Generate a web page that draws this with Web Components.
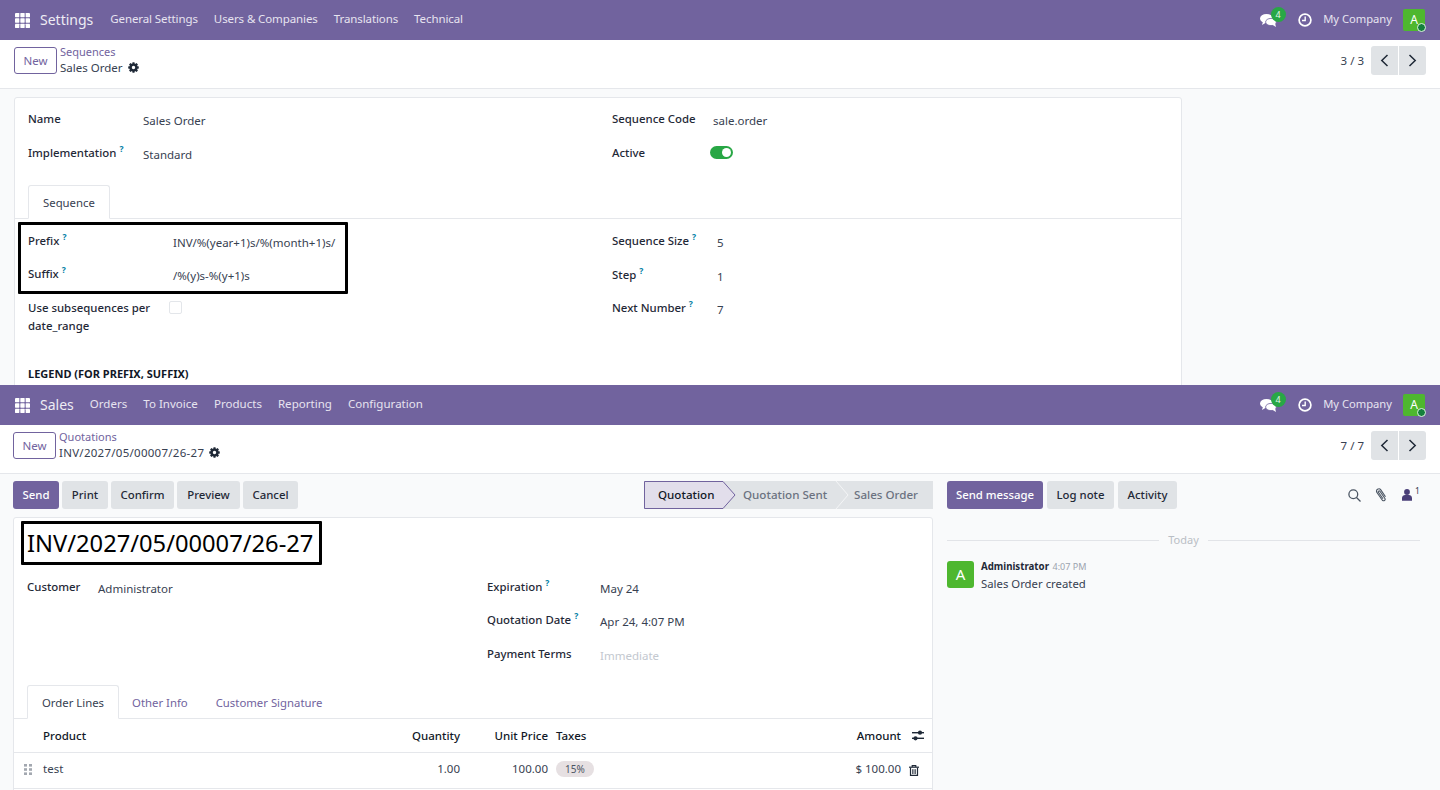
<!DOCTYPE html>
<html>
<head>
<meta charset="utf-8">
<title>Sequence and quotation</title>
<style>
  html, body { margin: 0; padding: 0; height: 790px; overflow: hidden; }
  body { font: 11.5px/18px "Noto Sans", "Open Sans", sans-serif; color: #374151; background: #f9fafb; }
</style>
</head>
<body>

<o-screen style="height:385px">
  <o-navbar app="Settings">
    <o-menu-item>General Settings</o-menu-item>
    <o-menu-item>Users &amp; Companies</o-menu-item>
    <o-menu-item>Translations</o-menu-item>
    <o-menu-item>Technical</o-menu-item>
  </o-navbar>
  <o-control-panel parent="Sequences" title="Sales Order" pager="3 / 3" style="--left:14px"></o-control-panel>
  <o-sheet style="margin:8px 0 0 14px;width:1168px">
    <o-columns style="--right:597px">
      <div slot="left" style="padding:6px 0 0 13px">
        <o-field label="Name" style="--lw:115px;--h:33.5px">Sales Order</o-field>
        <o-field label="Implementation" help style="--lw:115px;--h:33.5px">Standard</o-field>
      </div>
      <div slot="right" style="padding-top:6px">
        <o-field label="Sequence Code" style="--lw:101px;--h:33.5px">sale.order</o-field>
        <o-field label="Active" style="--lw:98px;--h:33.5px"><o-toggle></o-toggle></o-field>
      </div>
    </o-columns>
    <o-tabs style="margin-top:14px">
      <o-tab active>Sequence</o-tab>
    </o-tabs>
    <o-columns style="--right:597px">
      <div slot="left" style="padding-left:13px">
        <o-callout style="margin:3px 0 0 -10px;width:330px;padding:1px 0 0 7px;height:72px">
          <o-field label="Prefix" help style="--lw:145px">INV/%(year+1)s/%(month+1)s/</o-field>
          <o-field label="Suffix" help style="--lw:145px">/%(y)s-%(y+1)s</o-field>
        </o-callout>
        <o-field label="Use subsequences per date_range" style="--lw:145px;--h:38px;margin-top:-1px;--lwrap:132px"><o-checkbox></o-checkbox></o-field>
        <o-legend style="margin-top:34px">LEGEND (FOR PREFIX, SUFFIX)</o-legend>
      </div>
      <div slot="right" style="padding-top:7px">
        <o-field label="Sequence Size" help style="--lw:105px;--h:33.5px">5</o-field>
        <o-field label="Step" help style="--lw:105px;--h:33.5px">1</o-field>
        <o-field label="Next Number" help style="--lw:105px;--h:33.5px">7</o-field>
      </div>
    </o-columns>
  </o-sheet>
</o-screen>

<o-screen style="height:405px">
  <o-navbar app="Sales" style="--app-gap:16px;--menu-ls:.03px">
    <o-menu-item>Orders</o-menu-item>
    <o-menu-item>To Invoice</o-menu-item>
    <o-menu-item>Products</o-menu-item>
    <o-menu-item>Reporting</o-menu-item>
    <o-menu-item>Configuration</o-menu-item>
  </o-navbar>
  <o-control-panel parent="Quotations" title="INV/2027/05/00007/26-27" pager="7 / 7" style="--left:13px;--title-ls:.27px"></o-control-panel>
  <o-split>
    <div slot="form">
      <o-toolbar>
        <o-button kind="primary" style="width:46px">Send</o-button>
        <o-button style="width:46px">Print</o-button>
        <o-button style="width:63px">Confirm</o-button>
        <o-button style="width:63px">Preview</o-button>
        <o-button style="width:55px">Cancel</o-button>
        <o-statusbar></o-statusbar>
      </o-toolbar>
      <o-sheet style="margin-top:8px">
        <o-callout style="margin:3px 0 0 7px;width:301px;height:44px;padding:0 0 0 3px;align-items:center;display:flex">
          <o-title>INV/2027/05/00007/26-27</o-title>
        </o-callout>
        <o-columns style="--right:473px;margin-top:6.5px">
          <div slot="left" style="padding-left:13px">
            <o-field label="Customer" style="--lw:71px">Administrator</o-field>
          </div>
          <div slot="right">
            <o-field label="Expiration" help style="--lw:113px;--h:33.5px">May 24</o-field>
            <o-field label="Quotation Date" help style="--lw:113px;--h:33.5px">Apr 24, 4:07 PM</o-field>
            <o-field label="Payment Terms" style="--lw:113px;--h:33.5px"><span style="color:#c3c8cf">Immediate</span></o-field>
          </div>
        </o-columns>
        <o-tabs style="margin-top:12.5px">
          <o-tab active>Order Lines</o-tab>
          <o-tab>Other Info</o-tab>
          <o-tab>Customer Signature</o-tab>
        </o-tabs>
        <o-order-lines></o-order-lines>
      </o-sheet>
    </div>
    <o-chatter slot="chatter"></o-chatter>
  </o-split>
</o-screen>

<script>
const gearIcon = `<svg width="11" height="11" viewBox="0 0 24 24"><circle cx="12" cy="12" r="6.2" fill="none" stroke="#1f2937" stroke-width="5"/><g fill="#1f2937"><rect x="9.5" y="0.5" width="5" height="5" rx="1"/><rect x="9.5" y="18.5" width="5" height="5" rx="1"/><rect x="0.5" y="9.5" width="5" height="5" rx="1"/><rect x="18.5" y="9.5" width="5" height="5" rx="1"/><rect x="9.5" y="0.5" width="5" height="5" rx="1" transform="rotate(45 12 12)"/><rect x="9.5" y="18.5" width="5" height="5" rx="1" transform="rotate(45 12 12)"/><rect x="0.5" y="9.5" width="5" height="5" rx="1" transform="rotate(45 12 12)"/><rect x="18.5" y="9.5" width="5" height="5" rx="1" transform="rotate(45 12 12)"/></g></svg>`;

// Base class, every element just hands over its html
class ShadowBase extends HTMLElement {
  connectedCallback() {
    if (this.shadowRoot) return;
    const shadow = this.attachShadow({ mode: 'open' });
    const template = document.createElement('template');
    template.innerHTML = this.render();
    shadow.appendChild(template.content.cloneNode(true));
  }
}

class OScreen extends ShadowBase {
  render() {
    return `<style>:host { display: flex; flex-direction: column; overflow: hidden; }</style><slot></slot>`;
  }
}

class OMenuItem extends ShadowBase {
  render() {
    return `<style>:host { display: block; color: #e7e4f0; font-size: 11.5px; letter-spacing: var(--menu-ls, -.1px); margin-top: -2px; }</style><slot></slot>`;
  }
}

class ONavbar extends ShadowBase {
  render() {
    const cells = [0, 1, 2].map(y => [0, 1, 2].map(x =>
      `<rect x="${x * 5.4}" y="${y * 5.4}" width="4.4" height="4.4" rx=".5"/>`).join('')).join('');
    return `
    <style>
      :host { display: flex; align-items: center; flex: none; height: 40px; background: #71639e; color: #f1eff6; padding: 0 15px; box-sizing: border-box; }
      .grid { margin-right: 10px; display: block; }
      .app { font-size: 14px; margin-right: var(--app-gap, 17px); color: #eeecf4; }
      .menu { display: flex; gap: 16px; flex: 1; }
      .right { display: flex; align-items: center; }
      .chat { position: relative; width: 18px; height: 16px; margin-right: 20px; margin-top: 1px; }
      .badge { position: absolute; left: 10.5px; top: -6px; width: 15px; height: 15px; border-radius: 50%; background: #28a745; color: #e6f5e9; font-size: 9px; line-height: 15px; text-align: center; }
      .company { font-size: 11.2px; color: #e7e4f0; margin: -2px 11px 0 11px; }
      .avatar { position: relative; width: 22px; height: 22px; background: #4eb72f; border-radius: 2px; color: #fff; font-size: 12px; line-height: 22px; text-align: center; }
      .dot { position: absolute; right: -1px; bottom: -1px; width: 7px; height: 7px; border-radius: 50%; background: #14803c; border: 1px solid #dff3e2; }
    </style>
    <svg class="grid" width="15" height="15" viewBox="0 0 15.2 15.2" fill="#fff">${cells}</svg>
    <span class="app">${this.getAttribute('app')}</span>
    <div class="menu"><slot></slot></div>
    <div class="right">
      <div class="chat">
        <svg width="17" height="15" viewBox="0 0 17 15" fill="#fff" style="display:block"><ellipse cx="6.5" cy="5.5" rx="6.5" ry="4.6"/><path d="M3 8.5 L2 12 L7 9z"/><ellipse cx="11" cy="9" rx="5.4" ry="3.6" stroke="#71639e" stroke-width=".8"/><path d="M12 11.5 L16 14 L15 10z"/></svg>
        <span class="badge">4</span>
      </div>
      <svg width="14" height="14" viewBox="0 0 14 14" fill="none" stroke="#fff" stroke-width="1.7"><circle cx="7" cy="7" r="5.9"/><path d="M7.2 3.6V7.5H4" stroke-width="1.4"/></svg>
      <span class="company">My Company</span>
      <div class="avatar">A<span class="dot"></span></div>
    </div>`;
  }
}

class OControlPanel extends ShadowBase {
  render() {
    return `
    <style>
      :host { display: flex; align-items: center; flex: none; height: 49px; background: #fff; border-bottom: 1px solid #e5e7eb; padding: 0 14px 7px var(--left); box-sizing: border-box; }
      .new { width: 43px; height: 27px; box-sizing: border-box; border: 1px solid #71639e; border-radius: 3px; color: #71639e; text-align: center; line-height: 25px; font-size: 11.5px; margin-right: 3px; }
      .crumbs { flex: 1; line-height: 16px; font-size: 11.5px; margin-top: -2px; }
      .parent { color: #71639e; font-size: 11px; }
      .title { display: flex; align-items: center; gap: 5px; color: #374151; letter-spacing: var(--title-ls, 0); }
      .pager { display: flex; align-items: center; gap: 7px; font-size: 11.5px; }
      .nav { display: flex; gap: 1px; }
      .nav div { width: 27px; height: 29px; background: #e0e3e6; display: flex; align-items: center; justify-content: center; }
      .nav div:first-child { border-radius: 3px 0 0 3px; }
      .nav div:last-child { border-radius: 0 3px 3px 0; }
    </style>
    <div class="new">New</div>
    <div class="crumbs">
      <div class="parent">${this.getAttribute('parent')}</div>
      <div class="title"><span>${this.getAttribute('title')}</span>${gearIcon}</div>
    </div>
    <div class="pager">
      <span>${this.getAttribute('pager')}</span>
      <div class="nav">
        <div><svg width="9" height="13" viewBox="0 0 9 13" fill="none" stroke="#1f2937" stroke-width="1.5"><path d="M7.5 1 L1.8 6.5 L7.5 12"/></svg></div>
        <div><svg width="9" height="13" viewBox="0 0 9 13" fill="none" stroke="#1f2937" stroke-width="1.5"><path d="M1.5 1 L7.2 6.5 L1.5 12"/></svg></div>
      </div>
    </div>`;
  }
}

class OSheet extends ShadowBase {
  render() {
    return `<style>:host { display: block; background: #fff; border: 1px solid #e5e7eb; border-radius: 3px 3px 0 0; box-sizing: border-box; min-height: 400px; }</style><slot></slot>`;
  }
}

class OColumns extends ShadowBase {
  render() {
    return `
    <style>
      :host { display: grid; grid-template-columns: var(--right) 1fr; }
    </style>
    <slot name="left"></slot><slot name="right"></slot>`;
  }
}

class OField extends ShadowBase {
  render() {
    const help = this.hasAttribute('help') ? '<sup>?</sup>' : '';
    return `
    <style>
      :host { display: grid; grid-template-columns: var(--lw) 1fr; height: var(--h, 33px); }
      .label { font-weight: 500; color: #1f2937; padding-top: 6px; font-size: 11.4px; max-width: var(--lwrap, none); }
      .value { padding-top: 8px; font-size: 11.5px; color: #374151; }
      sup { color: #0180a5; font-size: 8.5px; font-weight: 700; line-height: 0; margin-left: 3px; vertical-align: 5px; }
    </style>
    <div class="label">${this.getAttribute('label')}${help}</div>
    <div class="value"><slot></slot></div>`;
  }
}

class OToggle extends ShadowBase {
  render() {
    return `
    <style>
      :host { display: block; width: 23px; height: 13px; border-radius: 7px; background: #28a745; position: relative; }
      i { position: absolute; right: 2px; top: 2px; width: 9px; height: 9px; border-radius: 50%; background: #fff; }
    </style><i></i>`;
  }
}

class OCheckbox extends ShadowBase {
  render() {
    return `<style>:host { display: block; width: 11px; height: 11px; margin: 0 0 0 -4px; border: 1px solid #e3e6ea; border-radius: 2px; background: #fff; }</style>`;
  }
}

class OTabs extends ShadowBase {
  render() {
    return `<style>:host { display: flex; padding-left: 13px; border-bottom: 1px solid #e5e7eb; height: 33px; }</style><slot></slot>`;
  }
}

class OTab extends ShadowBase {
  render() {
    return `
    <style>
      :host { display: block; height: 34px; box-sizing: border-box; padding: 0 14px 0 12px; line-height: 33px; font-size: 11.35px; color: #71639e; border: 1px solid transparent; }
      :host([active]) { padding: 0 14px; color: #374151; background: #fff; border-color: #e5e7eb; border-bottom-color: #fff; border-radius: 3px 3px 0 0; }
    </style><slot></slot>`;
  }
}

class OCallout extends ShadowBase {
  render() {
    return `<style>:host { display: block; border: 3px solid #000; border-radius: 1px; box-sizing: border-box; }</style><slot></slot>`;
  }
}

class OLegend extends ShadowBase {
  render() {
    return `<style>:host { display: block; font-weight: 700; font-size: 11px; color: #111827; }</style><slot></slot>`;
  }
}

class OTitle extends ShadowBase {
  render() {
    return `<style>:host { display: block; font-size: 23.7px; line-height: 38px; color: #000; white-space: nowrap; }</style><slot></slot>`;
  }
}

class OSplit extends ShadowBase {
  render() {
    return `
    <style>
      :host { display: flex; flex: 1; }
      .form { flex: none; width: 933px; padding-left: 13px; box-sizing: border-box; }
      .chatter { flex: 1; }
    </style>
    <div class="form"><slot name="form"></slot></div>
    <div class="chatter"><slot name="chatter"></slot></div>`;
  }
}

class OToolbar extends ShadowBase {
  render() {
    return `<style>:host { display: flex; gap: 3px; padding-top: 7px; }</style><slot></slot>`;
  }
}

class OButton extends ShadowBase {
  render() {
    return `
    <style>
      :host { display: block; height: 28px; box-sizing: border-box; background: #e0e3e6; color: #1f2937; border-radius: 3px; text-align: center; line-height: 28px; font-size: 11.4px; font-weight: 500; flex: none; }
      :host([kind=primary]) { background: #71639e; color: #fff; }
    </style><slot></slot>`;
  }
}

class OStatusbar extends ShadowBase {
  render() {
    return `
    <style>
      :host { display: block; position: relative; margin-left: auto; width: 289px; height: 28px; background: #e0e3e6; font-size: 11.6px; font-weight: 500; line-height: 28px; }
      svg { position: absolute; left: 0; top: 0; }
      .steps { position: relative; display: flex; }
      span { display: block; }
      .current { margin-left: 14px; width: 85px; color: #111827; }
      .sent { width: 111px; color: #6b7280; }
      .order { color: #6b7280; }
    </style>
    <svg width="289" height="28" viewBox="0 0 289 28">
      <path d="M.5 .5H79L91 14L79 27.5H.5z" fill="#e2deeb" stroke="#71639e"/>
      <path d="M192 0L204 14L192 28" fill="none" stroke="#f4f5f6"/>
    </svg>
    <div class="steps">
      <span class="current">Quotation</span>
      <span class="sent">Quotation Sent</span>
      <span class="order">Sales Order</span>
    </div>`;
  }
}

class OOrderLines extends ShadowBase {
  render() {
    return `
    <style>
      :host { display: block; font-size: 11.5px; }
      table { border-collapse: collapse; table-layout: fixed; width: 100%; }
      th { font-weight: 500; color: #111827; height: 31px; padding: 2px 8px 0; text-align: left; border-bottom: 1px solid #e5e7eb; }
      td { height: 33px; padding: 0 8px 2px; border-bottom: 1px solid #e5e7eb; color: #374151; }
      .num { text-align: right; }
      .first { padding-left: 29px; position: relative; }
      .grip { position: absolute; left: 10px; top: 11px; }
      .tax { padding-left: 0; }
      .pill { display: inline-block; height: 16px; line-height: 16px; padding: 0 9px; border-radius: 8px; background: #e6e0e2; font-size: 10px; color: #4b5563; }
      .icon { padding: 0; }
      svg { display: block; }
    </style>
    <table>
      <colgroup><col style="width:374px"><col style="width:80px"><col style="width:88px"><col style="width:244px"><col style="width:109px"><col></colgroup>
      <tr>
        <th class="first">Product</th><th class="num">Quantity</th><th class="num">Unit Price</th><th class="tax">Taxes</th><th class="num">Amount</th>
        <th class="icon"><svg width="12" height="11" viewBox="0 0 12 11" style="margin-left:3px" fill="#1f2937"><rect y="2" width="12" height="1.4"/><circle cx="8" cy="2.7" r="2.1"/><rect y="7.6" width="12" height="1.4"/><circle cx="3.5" cy="8.3" r="2.1"/></svg></th>
      </tr>
      <tr>
        <td class="first"><svg class="grip" width="8" height="11" viewBox="0 0 8 11" fill="#a3a8b0"><rect width="3" height="2.6"/><rect x="5" width="3" height="2.6"/><rect y="4.2" width="3" height="2.6"/><rect x="5" y="4.2" width="3" height="2.6"/><rect y="8.4" width="3" height="2.6"/><rect x="5" y="8.4" width="3" height="2.6"/></svg>test</td>
        <td class="num">1.00</td><td class="num">100.00</td><td class="tax"><span class="pill">15%</span></td><td class="num">$ 100.00</td>
        <td class="icon"><svg width="10" height="11" viewBox="0 0 10 11" fill="none" stroke="#1f2937" style="margin-left:0"><path d="M1.5 2.8V10.3H8.5V2.8" stroke-width="1.2"/><path d="M0 2.2H10" stroke-width="1.2"/><path d="M3.2 2V.6H6.8V2" stroke-width="1.1"/><path d="M3.6 4.2V9M5 4.2V9M6.4 4.2V9" stroke-width=".8"/></svg></td>
      </tr>
    </table>`;
  }
}

class OChatter extends ShadowBase {
  render() {
    return `
    <style>
      :host { display: block; padding: 7px 20px 0 14px; font-size: 11.35px; }
      .bar { display: flex; align-items: center; gap: 4px; height: 28px; }
      .btn { height: 28px; line-height: 28px; border-radius: 3px; background: #e0e3e6; color: #1f2937; text-align: center; font-weight: 500; box-sizing: border-box; }
      .btn.primary { background: #71639e; color: #fff; }
      .tools { margin-left: auto; display: flex; align-items: center; gap: 12px; color: #374151; }
      .clip { margin-right: 3px; }
      .count { font-size: 8.5px; line-height: 8px; margin: -8px 0 0 -9px; width: 5px; }
      .sep { display: flex; align-items: center; gap: 9px; margin-top: 22px; color: #b9bec5; font-size: 11px; line-height: 18px; }
      .sep i { flex: 1; height: 1px; background: #e2e4e8; }
      .msg { display: flex; gap: 7px; margin-top: 11px; }
      .avatar { width: 27px; height: 27px; border-radius: 3px; background: #4eb72f; color: #fff; text-align: center; line-height: 27px; font-size: 15px; margin-top: 1px; }
      .name { font-size: 9.7px; font-weight: 700; color: #1f2937; line-height: 12px; padding-top: 1px; }
      .time { font-size: 9px; font-weight: 400; color: #9ca3af; margin-left: 1px; }
      .body { margin-top: 2px; line-height: 18px; }
    </style>
    <div class="bar">
      <div class="btn primary" style="width:96px">Send message</div>
      <div class="btn" style="width:67px">Log note</div>
      <div class="btn" style="width:59px">Activity</div>
      <div class="tools">
        <svg width="13" height="13" viewBox="0 0 13 13" fill="none" stroke="#4b5563" stroke-width="1.3"><circle cx="5.3" cy="5.3" r="4.4"/><path d="M8.5 8.5L12.5 12.5"/></svg>
        <svg class="clip" width="14" height="14" viewBox="0 0 14 14" fill="none" stroke="#4b5563" stroke-width="1.1"><path d="M12.5 8.8L7.8 1.9C7.1 .9 5.6 .6 4.5 1.3 3.4 2 3.2 3.5 3.9 4.5L9.2 12C9.7 12.8 10.7 13 11.4 12.5 12.2 12 12.3 11 11.8 10.2L6.9 3.3C6.6 2.9 6 2.8 5.6 3.1 5.2 3.4 5.1 3.9 5.4 4.3L10 10.8"/></svg>
        <svg width="10" height="12" viewBox="0 0 10 12" fill="#4a3f78"><circle cx="5" cy="3" r="2.9"/><path d="M0 11.7V9C0 7 1.6 6 3 6H7C8.4 6 10 7 10 9V11.7z"/></svg>
        <span class="count">1</span>
      </div>
    </div>
    <div class="sep"><i></i><span>Today</span><i></i></div>
    <div class="msg">
      <div class="avatar">A</div>
      <div>
        <div class="name">Administrator <span class="time">4:07 PM</span></div>
        <div class="body">Sales Order created</div>
      </div>
    </div>`;
  }
}

customElements.define('o-screen', OScreen);
customElements.define('o-menu-item', OMenuItem);
customElements.define('o-navbar', ONavbar);
customElements.define('o-control-panel', OControlPanel);
customElements.define('o-sheet', OSheet);
customElements.define('o-columns', OColumns);
customElements.define('o-field', OField);
customElements.define('o-toggle', OToggle);
customElements.define('o-checkbox', OCheckbox);
customElements.define('o-tabs', OTabs);
customElements.define('o-tab', OTab);
customElements.define('o-callout', OCallout);
customElements.define('o-legend', OLegend);
customElements.define('o-title', OTitle);
customElements.define('o-split', OSplit);
customElements.define('o-toolbar', OToolbar);
customElements.define('o-button', OButton);
customElements.define('o-statusbar', OStatusbar);
customElements.define('o-order-lines', OOrderLines);
customElements.define('o-chatter', OChatter);
</script>
</body>
</html>
